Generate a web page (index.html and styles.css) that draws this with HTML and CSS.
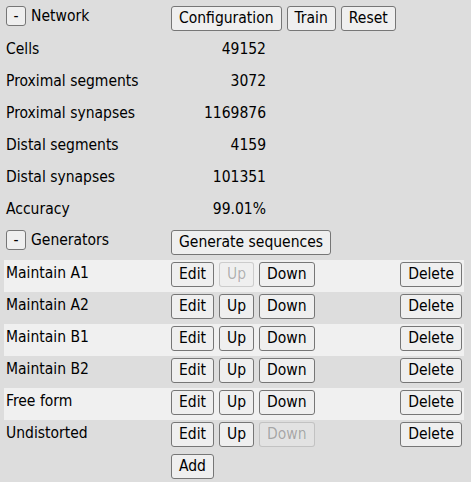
FILE: index.html
```html
<!DOCTYPE html>
<html><head><meta charset="utf-8"><link rel="stylesheet" href="styles.css"></head>
<body>
<div class="panel">
  <div class="row">
    <div class="label head"><button class="btn toggle">-</button><span>Network</span></div>
    <div class="actions"><button class="btn">Configuration</button><button class="btn">Train</button><button class="btn">Reset</button></div>
  </div>
  <div class="row stat"><div class="label">Cells</div><div class="value">49152</div></div>
  <div class="row stat"><div class="label">Proximal segments</div><div class="value">3072</div></div>
  <div class="row stat"><div class="label">Proximal synapses</div><div class="value">1169876</div></div>
  <div class="row stat"><div class="label">Distal segments</div><div class="value">4159</div></div>
  <div class="row stat"><div class="label">Distal synapses</div><div class="value">101351</div></div>
  <div class="row stat"><div class="label">Accuracy</div><div class="value">99.01%</div></div>
  <div class="row">
    <div class="label head"><button class="btn toggle">-</button><span>Generators</span></div>
    <div class="actions"><button class="btn">Generate sequences</button></div>
  </div>
  <div class="row gen alt">
    <div class="label">Maintain A1</div>
    <div class="actions"><button class="btn">Edit</button><button class="btn" disabled>Up</button><button class="btn">Down</button><button class="btn del">Delete</button></div>
  </div>
  <div class="row gen">
    <div class="label">Maintain A2</div>
    <div class="actions"><button class="btn">Edit</button><button class="btn">Up</button><button class="btn">Down</button><button class="btn del">Delete</button></div>
  </div>
  <div class="row gen alt">
    <div class="label">Maintain B1</div>
    <div class="actions"><button class="btn">Edit</button><button class="btn">Up</button><button class="btn">Down</button><button class="btn del">Delete</button></div>
  </div>
  <div class="row gen">
    <div class="label">Maintain B2</div>
    <div class="actions"><button class="btn">Edit</button><button class="btn">Up</button><button class="btn">Down</button><button class="btn del">Delete</button></div>
  </div>
  <div class="row gen alt">
    <div class="label">Free form</div>
    <div class="actions"><button class="btn">Edit</button><button class="btn">Up</button><button class="btn">Down</button><button class="btn del">Delete</button></div>
  </div>
  <div class="row gen">
    <div class="label">Undistorted</div>
    <div class="actions"><button class="btn">Edit</button><button class="btn">Up</button><button class="btn" disabled>Down</button><button class="btn del">Delete</button></div>
  </div>
  <div class="row">
    <div class="label"></div>
    <div class="actions"><button class="btn">Add</button></div>
  </div>
</div>
</body></html>
```
FILE: styles.css
```css
html, body {
  margin: 0;
  background: #dddddd;
}
body {
  padding: 4px;
  font-family: "DejaVu Sans Condensed", "DejaVu Sans", sans-serif;
  font-size: 15.5px;
  color: #000;
}
.panel {
  width: 460px;
  display: flex;
  flex-direction: column;
}
.row {
  display: grid;
  grid-template-columns: 165px 1fr;
  height: 32px;
  box-sizing: border-box;
}
.row.alt {
  background: #f0f0f0;
}
.label {
  padding: 4px 2px 0;
  line-height: 19px;
  white-space: nowrap;
}
.label.head {
  display: flex;
  align-items: center;
  gap: 5px;
  padding-top: 2px;
  height: 20px;
  line-height: 18px;
}
.stat .value {
  width: 97px;
  text-align: right;
  padding-top: 4px;
  line-height: 19px;
}
.gen .label {
  padding-top: 4px;
}
.actions {
  display: flex;
  gap: 5px;
  padding: 2px 2px 0 2px;
  align-items: flex-start;
}
.btn {
  font: inherit;
  color: #000;
  height: 25px;
  padding: 0 7px;
  margin: 0;
  background: #efefef;
  border: 1px solid #767676;
  border-radius: 3px;
  line-height: 21px;
}
.btn:disabled {
  background: rgba(239, 239, 239, 0.3);
  border-color: rgba(118, 118, 118, 0.3);
  color: rgba(16, 16, 16, 0.3);
}
.btn.toggle {
  width: 20px;
  height: 20px;
  padding: 0;
  line-height: 16px;
}
.btn.del {
  margin-left: auto;
}
```
